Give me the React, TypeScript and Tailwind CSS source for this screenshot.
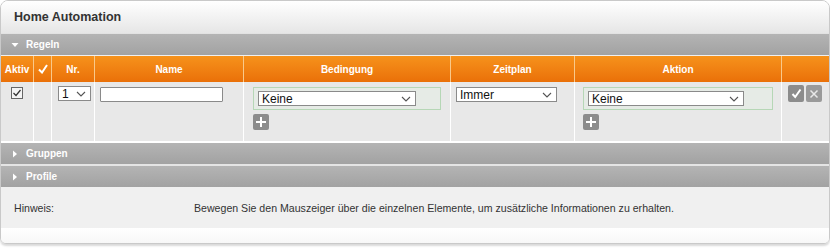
import React from "react";

const font = { fontFamily: '"Liberation Sans", Arial, sans-serif' };

function Chevron() {
  return (
    <svg width="10" height="6" viewBox="0 0 10 6" className="shrink-0">
      <path d="M1 1 L5 5 L9 1" fill="none" stroke="#555" strokeWidth="1.1" />
    </svg>
  );
}

function Select({ value, className }: { value: string; className: string }) {
  return (
    <div
      className={`flex h-[15px] items-center justify-between border border-[#8a8a8a] bg-white pl-[3px] pr-[4px] text-[12px] leading-none text-[#111] ${className}`}
    >
      <span>{value}</span>
      <Chevron />
    </div>
  );
}

function PlusBtn() {
  return (
    <div className="flex h-[16px] w-[16px] items-center justify-center rounded-[2px] bg-[#8c8c8c]">
      <svg width="12" height="12" viewBox="0 0 12 12">
        <path d="M6 1 V11 M1 6 H11" stroke="#fff" strokeWidth="2" />
      </svg>
    </div>
  );
}

function Bar({ label, open }: { label: string; open?: boolean }) {
  return (
    <div className="flex h-[21px] items-center bg-gradient-to-b from-[#b4b4b4] to-[#a2a2a2] pl-[10px] text-[10px] font-bold text-white">
      <svg width="8" height="8" viewBox="0 0 8 8" className="mr-[7px]">
        {open ? (
          <path d="M0.5 2 L7.5 2 L4 6 Z" fill="#fff" />
        ) : (
          <path d="M2 0.5 L6 4 L2 7.5 Z" fill="#fff" />
        )}
      </svg>
      {label}
    </div>
  );
}

export default function App() {
  const cols = "grid grid-cols-[33px_18px_43px_149px_207px_124px_207px_49px]";
  return (
    <div className="h-[248px] w-[830px] bg-white" style={font}>
      <div className="overflow-hidden rounded-t-[8px] rounded-b-[6px] border border-[#c9c9c9] shadow-[0_2px_2px_rgba(0,0,0,0.15)]">
        <div className="flex h-[32px] items-center bg-gradient-to-b from-[#ffffff] to-[#e6e6e6] pl-[13px] text-[12.5px] font-bold text-[#333]">
          Home Automation
        </div>
        <div className="h-px bg-[#e2e2e2]" />
        <Bar label="Regeln" open />
        <div className="h-px bg-[#f0f0f0]" />
        <div className={`${cols} h-[26px] bg-gradient-to-b from-[#f6921b] to-[#ea7008] text-[10px] font-bold text-white`}>
          {["Aktiv", "✓", "Nr.", "Name", "Bedingung", "Zeitplan", "Aktion", ""].map((h, i) => (
            <div
              key={i}
              className={`flex items-center justify-center ${i < 7 ? "border-r border-[#f9c98a]" : ""}`}
            >
              {i === 1 ? (
                <svg width="10" height="10" viewBox="0 0 10 10">
                  <path d="M1 5.5 L4 8.5 L9 1" fill="none" stroke="#fff" strokeWidth="2" />
                </svg>
              ) : (
                h
              )}
            </div>
          ))}
        </div>
        <div className={`${cols} h-[59px] bg-[#e8e8e8]`}>
          <div className="flex justify-center border-r border-white pt-[5px]">
            <div className="flex h-[12px] w-[12px] items-center justify-center border border-[#666] bg-[#f4f4f4]">
              <svg width="10" height="10" viewBox="0 0 10 10">
                <path d="M1.5 5 L4 7.5 L8.5 2" fill="none" stroke="#333" strokeWidth="1.2" />
              </svg>
            </div>
          </div>
          <div className="border-r border-white" />
          <div className="border-r border-white pl-[6px] pt-[4px]">
            <Select value="1" className="w-[33px]" />
          </div>
          <div className="border-r border-white pl-[5px] pt-[5px]">
            <div className="h-[15px] w-[123px] rounded-[1px] border border-[#8a8a8a] bg-white" />
          </div>
          <div className="flex flex-col gap-[4px] border-r border-white pl-[9px] pt-[5px]">
            <div className="flex h-[23px] w-[188px] items-center border border-[#b6d7b6] bg-[#e6ebe6] pl-[4px]">
              <Select value="Keine" className="w-[158px]" />
            </div>
            <PlusBtn />
          </div>
          <div className="border-r border-white pl-[5px] pt-[5px]">
            <Select value="Immer" className="w-[101px]" />
          </div>
          <div className="flex flex-col gap-[4px] border-r border-white pl-[8px] pt-[5px]">
            <div className="flex h-[23px] w-[190px] items-center border border-[#b6d7b6] bg-[#e6ebe6] pl-[4px]">
              <Select value="Keine" className="w-[156px]" />
            </div>
            <PlusBtn />
          </div>
          <div className="flex gap-[2px] pl-[6px] pt-[3px]">
            <div className="flex h-[17px] w-[16px] items-center justify-center rounded-[2px] bg-[#8c8c8c]">
              <svg width="11" height="11" viewBox="0 0 11 11">
                <path d="M1.5 6 L4.2 9 L9.5 1.5" fill="none" stroke="#fff" strokeWidth="2" />
              </svg>
            </div>
            <div className="flex h-[17px] w-[16px] items-center justify-center rounded-[2px] bg-[#9a9a9a]">
              <svg width="10" height="10" viewBox="0 0 10 10">
                <path d="M1.5 1.5 L8.5 8.5 M8.5 1.5 L1.5 8.5" fill="none" stroke="#e8e8e8" strokeWidth="1.5" />
              </svg>
            </div>
          </div>
        </div>
        <div className="h-[2px] bg-white" />
        <Bar label="Gruppen" />
        <div className="h-[2px] bg-[#e4e4e4]" />
        <Bar label="Profile" />
        <div className="flex h-[41px] items-center bg-[#f0f0f0] pt-[3px] text-[10.6px] text-[#333]">
          <div className="w-[193px] pl-[13px]">Hinweis:</div>
          <div>Bewegen Sie den Mauszeiger über die einzelnen Elemente, um zusätzliche Informationen zu erhalten.</div>
        </div>
        <div className="h-[15px] bg-gradient-to-b from-white to-[#f7f7f7]" />
      </div>
    </div>
  );
}
